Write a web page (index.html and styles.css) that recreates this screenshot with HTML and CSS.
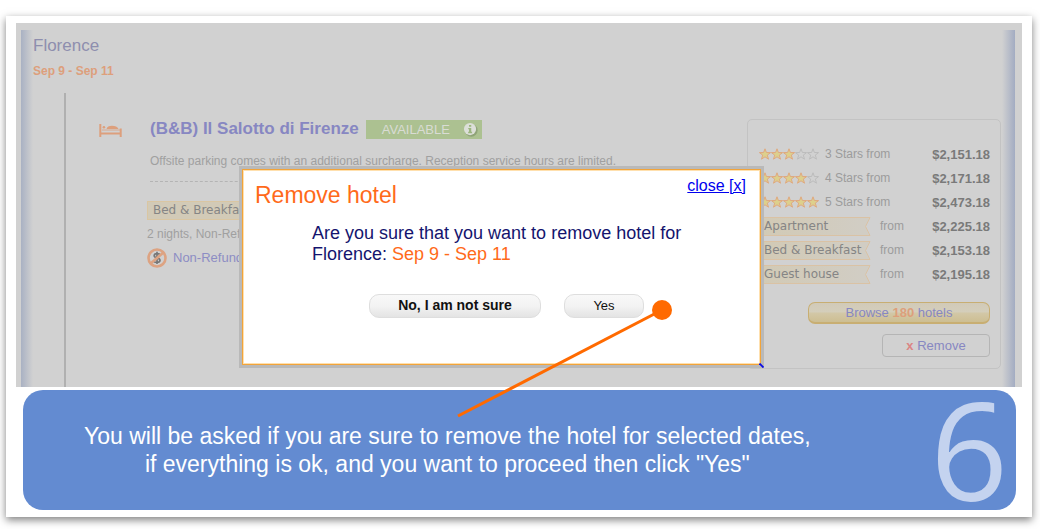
FILE: index.html
```html
<!DOCTYPE html>
<html lang="en">
<head>
<meta charset="utf-8">
<title>Remove hotel</title>
<link rel="stylesheet" href="styles.css">
</head>
<body>
<svg class="defs" aria-hidden="true">
  <defs>
    <symbol id="star" viewBox="0 0 12 12"><path d="M6 .8 7.4 4.5 11.6 4.6 8.3 7.1 9.5 11.2 6 8.8 2.5 11.2 3.7 7.1.4 4.6 4.6 4.5Z"/></symbol>
  </defs>
</svg>
<main class="card">
  <section class="shot">
    <div class="trip">
      <header class="city">
        <h1 class="city-name">Florence</h1>
        <p class="city-dates">Sep 9 - Sep 11</p>
      </header>
      <div class="timeline">
        <svg class="bed" viewBox="0 0 23 13" aria-hidden="true">
          <path d="M1.3 0V13M21.7 4.5V13" stroke="#dd9f7c" stroke-width="2" fill="none"/>
          <path d="M1 9.500H22" stroke="#dd9f7c" stroke-width="2"/>
          <path d="M7.500 5C8 3 10 1.800 13 1.800s5.500 1 6.500 3.200Z" fill="#dd9f7c"/>
          <path d="M3 6H21" stroke="#dd9f7c" stroke-width=".8"/>
          <circle cx="4.900" cy="3.200" r="1.300" fill="#dd9f7c"/>
        </svg>
        <article class="hotel">
          <div class="hotel-head">
            <h2 class="hotel-name">(B&amp;B) Il Salotto di Firenze</h2>
            <span class="badge">AVAILABLE
              <svg class="info" viewBox="0 0 16 16" aria-hidden="true"><circle cx="8.800" cy="8.800" r="6.800" fill="#8fa378"/><circle cx="7.500" cy="7.500" r="6.500" fill="#dcdfd8"/><path d="M6.400 3.200H8.800V5.100H6.400ZM5.600 6.300H8.800V10.400H9.700V11.900H5.500V10.400H6.400V7.700H5.600Z" fill="#9cb67f"/></svg>
            </span>
          </div>
          <p class="note">Offsite parking comes with an additional surcharge. Reception service hours are limited.</p>
          <div class="offer">
            <span class="tag">Bed &amp; Breakfast</span>
            <p class="terms">2 nights, Non-Refundable</p>
            <p class="refund">
              <svg class="no-refund" viewBox="0 0 20 20" aria-hidden="true"><path d="M13 6.800C12.500 5.300 7.200 4.900 7.200 7.700 7.200 10.500 13 9.200 13 12.200 13 15.200 7.200 14.800 6.800 12.800M10 3.800V16" fill="none" stroke="#777" stroke-width="1.700"/><circle cx="10" cy="10" r="8.500" fill="none" stroke="#dda382" stroke-width="2.600"/><path d="M15.800 5 4.200 15" stroke="#dda382" stroke-width="2.600"/></svg>
              <a class="link" href="#">Non-Refundable</a>
            </p>
          </div>
        </article>
        <aside class="panel">
          <table class="rates">
            <tr><td><span class="rate"><span class="stars"><svg class="on"><use href="#star"/></svg><svg class="on"><use href="#star"/></svg><svg class="on"><use href="#star"/></svg><svg><use href="#star"/></svg><svg><use href="#star"/></svg></span>3 Stars from</span></td><td class="price">$2,151.18</td></tr>
            <tr><td><span class="rate"><span class="stars"><svg class="on"><use href="#star"/></svg><svg class="on"><use href="#star"/></svg><svg class="on"><use href="#star"/></svg><svg class="on"><use href="#star"/></svg><svg><use href="#star"/></svg></span>4 Stars from</span></td><td class="price">$2,171.18</td></tr>
            <tr><td><span class="rate"><span class="stars"><svg class="on"><use href="#star"/></svg><svg class="on"><use href="#star"/></svg><svg class="on"><use href="#star"/></svg><svg class="on"><use href="#star"/></svg><svg class="on"><use href="#star"/></svg></span>5 Stars from</span></td><td class="price">$2,473.18</td></tr>
            <tr><td><span class="rate"><span class="ribbon">Apartment<svg class="ribbon-end" viewBox="0 0 8 19" aria-hidden="true"><path d="M0 .5H7L2.500 9.500 7 18.500H0" fill="#d1cdc4" stroke="#dac2a4"/></svg></span>from</span></td><td class="price">$2,225.18</td></tr>
            <tr><td><span class="rate"><span class="ribbon">Bed &amp; Breakfast<svg class="ribbon-end" viewBox="0 0 8 19" aria-hidden="true"><path d="M0 .5H7L2.500 9.500 7 18.500H0" fill="#d1cdc4" stroke="#dac2a4"/></svg></span>from</span></td><td class="price">$2,153.18</td></tr>
            <tr><td><span class="rate"><span class="ribbon">Guest house<svg class="ribbon-end" viewBox="0 0 8 19" aria-hidden="true"><path d="M0 .5H7L2.500 9.500 7 18.500H0" fill="#d1cdc4" stroke="#dac2a4"/></svg></span>from</span></td><td class="price">$2,195.18</td></tr>
          </table>
          <button class="browse" type="button">Browse <b>180</b> hotels</button>
          <button class="remove" type="button"><i>x</i> Remove</button>
        </aside>
      </div>
    </div>
    <div class="dialog" role="dialog" aria-labelledby="dialog-title">
      <div class="dialog-head">
        <h2 class="dialog-title" id="dialog-title">Remove hotel</h2>
        <a class="close" href="#">close [x]</a>
      </div>
      <p class="question">Are you sure that you want to remove hotel for<br>Florence: <span class="dates">Sep 9 - Sep 11</span></p>
      <div class="actions">
        <button class="btn btn-no" type="button">No, I am not sure</button>
        <button class="btn" type="button">Yes</button>
      </div>
      <svg class="grip" viewBox="0 0 5 5" aria-hidden="true"><path d="M.5.5 4.500 4.500" stroke="#0a0ae6" stroke-width="1.800"/></svg>
    </div>
  </section>
  <section class="banner">
    <p class="hint">You will be asked if you are sure to remove the hotel for selected dates,<br>if everything is ok, and you want to proceed then click "Yes"</p>
    <span class="step">6</span>
  </section>
  <svg class="pointer" viewBox="0 0 220 120" aria-hidden="true"><path d="M3 116 207 10" stroke="#ff6a00" stroke-width="3"/><circle cx="207" cy="10" r="10" fill="#ff6a00"/></svg>
</main>
</body>
</html>
```

FILE: styles.css
```css
* { box-sizing: border-box; }
body { margin: 0; background: #fff; font-family: "Liberation Sans", Arial, sans-serif; }
h1, h2, p { margin: 0; font-weight: normal; }
button { font-family: inherit; cursor: pointer; }
.defs { position: absolute; width: 0; height: 0; }

.card {
  position: relative;
  margin: 16px 8px 12px 6px;
  padding: 7px 10px;
  background: #fff;
  box-shadow: 0 3px 8px rgba(0, 0, 0, .5);
}

/* Itinerary behind the dialog */
.shot { position: relative; padding: 7px 7px 0 5px; background: #d1d1d1; }
.trip {
  padding: 0 14px 0 12px;
  background:
    linear-gradient(to right, #a9b1c3, #d1d1d1) left / 12px 100% no-repeat,
    linear-gradient(to left, #a3acc2, #d1d1d1) right / 13px 100% no-repeat;
}
.city { padding-top: 6px; }
.city-name { font-size: 17px; line-height: 20px; color: #8e8eae; }
.city-dates { margin-top: 6px; font-size: 12px; line-height: 18px; font-weight: bold; color: #dd9f7c; }
.timeline {
  display: flex;
  align-items: flex-start;
  margin: 13px 0 0 31px;
  padding: 26px 0 18px 33px;
  border-left: 2px solid #b0b0b0;
}
.bed { flex: none; width: 23px; height: 13px; margin-top: 5px; }
.hotel { flex: 1; min-width: 0; padding-left: 25px; }
.hotel-head { display: flex; align-items: center; gap: 7px; padding-left: 3px; }
.hotel-name { font-size: 17px; line-height: 20px; font-weight: bold; color: #8787c2; white-space: nowrap; }
.badge {
  display: flex;
  align-items: center;
  gap: 13px;
  padding: 0 4px 0 16px;
  font-size: 13px;
  line-height: 19px;
  color: #d9dcd4;
  background: #acc191;
}
.info { width: 15px; height: 15px; }
.note {
  margin: 0 16px 0 3px;
  padding: 14px 0 12px;
  font-size: 12px;
  line-height: 16px;
  color: #a0a0a0;
  border-bottom: 1px dashed #b4b4b4;
}
.offer { padding-top: 18px; }
.tag {
  display: inline-block;
  padding: 0 5px;
  font: 12px/17px "DejaVu Sans", Verdana, sans-serif;
  color: #858585;
  background: #d2cab7;
  border: 1px solid #dac6a2;
}
.terms { margin-top: 5px; font-size: 12px; line-height: 18px; color: #a0a0a0; }
.refund { display: flex; align-items: center; gap: 6px; margin-top: 5px; font-size: 13px; line-height: 20px; }
.no-refund { width: 20px; height: 20px; }
.link { color: #8d8dc4; text-decoration: none; }

.panel {
  display: flex;
  flex: none;
  flex-direction: column;
  align-items: flex-end;
  width: 254px;
  padding: 22px 10px 11px 11px;
  border: 1px solid #c3c3c3;
  border-radius: 5px;
}
.rates { width: 100%; border-collapse: collapse; }
.rates td { height: 24px; padding: 0; font-size: 12px; line-height: 19px; color: #9c9c9c; }
.rates .price { font-size: 13px; font-weight: bold; text-align: right; color: #7a7a7a; }
.rate { display: flex; align-items: center; }
.stars { display: flex; width: 66px; }
.stars svg { width: 12px; height: 12px; fill: #d1d1d1; stroke: #bcbcbc; }
.stars .on { fill: #ddd08c; stroke: #dfa87f; }
.ribbon {
  display: flex;
  justify-content: space-between;
  width: 112px;
  margin-right: 9px;
  padding-left: 5px;
  font: 12px/19px "DejaVu Sans", Verdana, sans-serif;
  color: #858585;
  background:
    linear-gradient(#dac2a4, #dac2a4) top left / 104px 1px no-repeat,
    linear-gradient(#dac2a4, #dac2a4) bottom left / 104px 1px no-repeat,
    linear-gradient(to right, #d2cab5, #d1cdc4) left / 104px 100% no-repeat;
}
.ribbon-end { flex: none; width: 8px; height: 19px; }
.browse, .remove { font-size: 13px; color: #8787c2; padding: 0; }
.browse {
  width: 182px;
  height: 22px;
  margin-top: 16px;
  background: linear-gradient(#d1cab8, #d4cebb 45%, #d2c7a6 55%, #cdbe92);
  border: 1px solid #c8ae72;
  border-bottom-width: 2px;
  border-radius: 7px;
}
.browse b { font-weight: bold; color: #dd9f7c; }
.remove {
  width: 108px;
  height: 23px;
  margin-top: 10px;
  background: transparent;
  border: 1px solid #b5b5b5;
  border-radius: 4px;
}
.remove i { font-style: normal; font-weight: bold; color: #dc8585; }

/* Confirmation dialog */
.dialog {
  position: absolute;
  top: 146px;
  left: 226px;
  width: 519px;
  padding: 6px 14px 46px 12px;
  background: #fff;
  border: 1px solid #f2a43a;
  box-shadow: inset 0 0 0 1px #ffe0ae, 0 0 0 3px #b9b9b9;
}
.dialog-head { display: flex; justify-content: space-between; align-items: flex-start; }
.dialog-title { padding-top: 5px; font-size: 23px; line-height: 28px; color: #ff6a1a; }
.close { font-size: 16px; line-height: 20px; color: #0000ee; }
.question { margin-top: 14px; padding-left: 57px; font-size: 18px; line-height: 21px; color: #14146e; white-space: nowrap; }
.dates { color: #ff6a1a; }
.actions { display: flex; gap: 23px; margin-top: 29px; padding-left: 114px; }
.btn {
  width: 80px;
  height: 24px;
  padding: 0 0 2px;
  font-size: 13px;
  color: #111;
  background: linear-gradient(#f8f8f8, #f3f3f3 50%, #ebebeb 75%, #e4e4e4);
  border: 1px solid #dedede;
  border-radius: 10px;
}
.btn-no { width: 172px; font-size: 14px; font-weight: bold; }
.grip { position: absolute; right: -4px; bottom: -4px; width: 5px; height: 5px; }

/* Instruction banner */
.banner {
  display: flex;
  align-items: center;
  justify-content: space-between;
  min-height: 120px;
  margin: 3px 6px 0 7px;
  padding: 0 8px 0 61px;
  color: #fff;
  background: #638bd1;
  border-radius: 20px;
}
.hint { font-size: 23px; line-height: 28px; text-align: center; }
.step { padding-bottom: 2px; font: 136px/118px "Open Sans", sans-serif; color: #c4d3ef; }
.pointer { position: absolute; top: 284px; left: 449px; width: 220px; height: 120px; }
```
